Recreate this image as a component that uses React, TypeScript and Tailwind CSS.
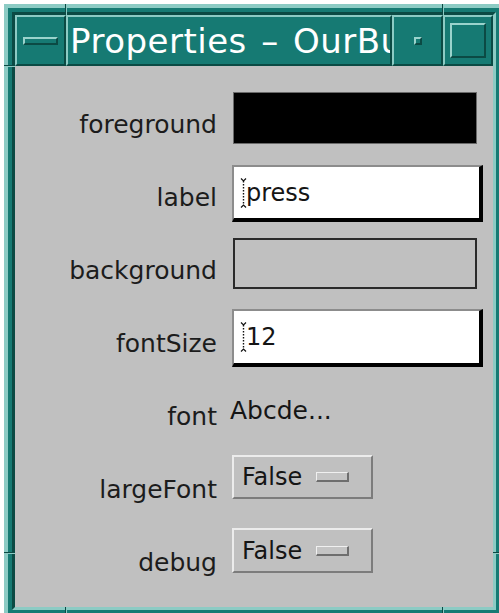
import React from "react";

const FONT = { fontFamily: '"DejaVu Sans", "Liberation Sans", sans-serif' };

function TextCursor() {
  return (
    <svg width="7" height="30" viewBox="0 0 7 30" className="shrink-0">
      <path d="M1 0.5 L3.5 3 L6 0.5" stroke="#111" strokeWidth="1.2" fill="none" />
      <path d="M1 29.5 L3.5 27 L6 29.5" stroke="#111" strokeWidth="1.2" fill="none" />
      <line x1="3.5" y1="3" x2="3.5" y2="27" stroke="#111" strokeWidth="1.4" strokeDasharray="1.5 1.5" />
    </svg>
  );
}

function Label({ children }: { children: React.ReactNode }) {
  return (
    <div className="w-[202px] shrink-0 text-right text-[25px] leading-[30px] mt-[28px] text-[#1c1c1c]">
      {children}
    </div>
  );
}

function TextField({ value, top, height }: { value: string; top: string; height: string }) {
  return (
    <div
      className={`ml-[15px] w-[251px] ${top} ${height} bg-white border-t-2 border-l-2 border-[#8c8c8c] border-r-4 border-b-4 border-r-black border-b-black flex items-center pl-[6px]`}
    >
      <TextCursor />
      <span className="text-[24px] leading-[30px] text-[#151515] -ml-[1px]">{value}</span>
    </div>
  );
}

function Toggle({ top, height }: { top: string; height: string }) {
  return (
    <div
      className={`ml-[15px] w-[141px] ${top} ${height} bg-[#c0c0c0] border-t-2 border-l-2 border-[#ececec] border-r-2 border-b-2 border-r-[#7c7c7c] border-b-[#7c7c7c] flex items-center pl-[8px]`}
    >
      <span className="text-[24px] leading-[30px] text-[#151515]">False</span>
      <div className="ml-[14px] w-[33px] h-[10px] border-t border-l border-[#f0f0f0] border-r-2 border-b-2 border-r-[#6e6e6e] border-b-[#6e6e6e] bg-[#c4c4c4]" />
    </div>
  );
}

export default function App() {
  return (
    <div className="relative w-[499px] h-[613px] overflow-hidden bg-white" style={FONT}>
      {/* window frame: outer bevel, teal body, inner bevel */}
      <div className="ml-[4px] mt-[4px] w-[500px] h-[614px] border-4 border-t-[#8ccbc4] border-l-[#8ccbc4] border-r-[#0b4a44] border-b-[#0b4a44] bg-[#167a73] p-[4px]">
        <div className="h-full flex flex-col border-[3px] border-t-[#0b4a44] border-l-[#0b4a44] border-r-[#8ccbc4] border-b-[#8ccbc4]">
          {/* title bar */}
          <div className="h-[51px] flex shrink-0 bg-[#167a73]">
            <div className="w-[51px] border-2 border-t-[#8ccbc4] border-l-[#8ccbc4] border-r-[#0b4a44] border-b-[#0b4a44] flex items-center justify-center">
              <div className="w-[35px] h-[8px] border-t-2 border-l-2 border-[#9ad3cc] border-r-2 border-b-2 border-r-[#0b4a44] border-b-[#0b4a44]" />
            </div>
            <div className="flex-1 overflow-hidden border-2 border-t-[#8ccbc4] border-l-[#8ccbc4] border-r-[#0b4a44] border-b-[#0b4a44] flex items-center pl-[2px]">
              <span className="text-white text-[34px] leading-none whitespace-nowrap pt-[1px] tracking-[0.5px] [word-spacing:3px]">
                Properties – OurBu
              </span>
            </div>
            <div className="w-[51px] border-2 border-t-[#8ccbc4] border-l-[#8ccbc4] border-r-[#0b4a44] border-b-[#0b4a44] flex items-center justify-center">
              <div className="w-[8px] h-[8px] border-t-2 border-l-2 border-[#9ad3cc] border-r-2 border-b-2 border-r-[#0b4a44] border-b-[#0b4a44]" />
            </div>
            <div className="w-[50px] border-2 border-t-[#8ccbc4] border-l-[#8ccbc4] border-r-[#0b4a44] border-b-[#0b4a44] flex items-center justify-center">
              <div className="w-[36px] h-[35px] border-t-2 border-l-2 border-[#9ad3cc] border-r-2 border-b-2 border-r-[#0b4a44] border-b-[#0b4a44]" />
            </div>
          </div>

          {/* property sheet */}
          <div className="flex-1 bg-[#c0c0c0] pt-[16px]">
            <div className="h-[73px] flex items-start">
              <Label>foreground</Label>
              <div className="ml-[16px] mt-[10px] w-[244px] h-[52px] bg-black border border-[#6a6a6a]" />
            </div>
            <div className="h-[73px] flex items-start">
              <Label>label</Label>
              <TextField value="press" top="mt-[10px]" height="h-[57px]" />
            </div>
            <div className="h-[73px] flex items-start">
              <Label>background</Label>
              <div className="ml-[16px] mt-[10px] w-[244px] h-[51px] border-2 border-[#2a2a2a]" />
            </div>
            <div className="h-[73px] flex items-start">
              <Label>fontSize</Label>
              <TextField value="12" top="mt-[8px]" height="h-[58px]" />
            </div>
            <div className="h-[73px] flex items-start">
              <Label>font</Label>
              <div className="ml-[13px] mt-[22px] text-[25px] leading-[30px] text-[#151515]">Abcde...</div>
            </div>
            <div className="h-[73px] flex items-start">
              <Label>largeFont</Label>
              <Toggle top="mt-[8px]" height="h-[44px]" />
            </div>
            <div className="h-[73px] flex items-start">
              <Label>debug</Label>
              <Toggle top="mt-[8px]" height="h-[45px]" />
            </div>
          </div>
        </div>
      </div>

      {/* resize-handle notches in the frame border */}
      <div className="absolute left-[65px] top-[4px] w-[2px] h-[11px] border-l border-l-[#0b4a44] border-r border-r-[#8ccbc4]" />
      <div className="absolute left-[442px] top-[4px] w-[2px] h-[11px] border-l border-l-[#0b4a44] border-r border-r-[#8ccbc4]" />
      <div className="absolute left-[4px] top-[65px] w-[11px] h-[2px] border-t border-t-[#0b4a44] border-b border-b-[#8ccbc4]" />
      <div className="absolute left-[4px] top-[552px] w-[11px] h-[2px] border-t border-t-[#0b4a44] border-b border-b-[#8ccbc4]" />
      <div className="absolute left-[493px] top-[552px] w-[11px] h-[2px] border-t border-t-[#0b4a44] border-b border-b-[#8ccbc4]" />
      <div className="absolute left-[65px] top-[607px] w-[2px] h-[11px] border-l border-l-[#0b4a44] border-r border-r-[#8ccbc4]" />
      <div className="absolute left-[442px] top-[607px] w-[2px] h-[11px] border-l border-l-[#0b4a44] border-r border-r-[#8ccbc4]" />
    </div>
  );
}
